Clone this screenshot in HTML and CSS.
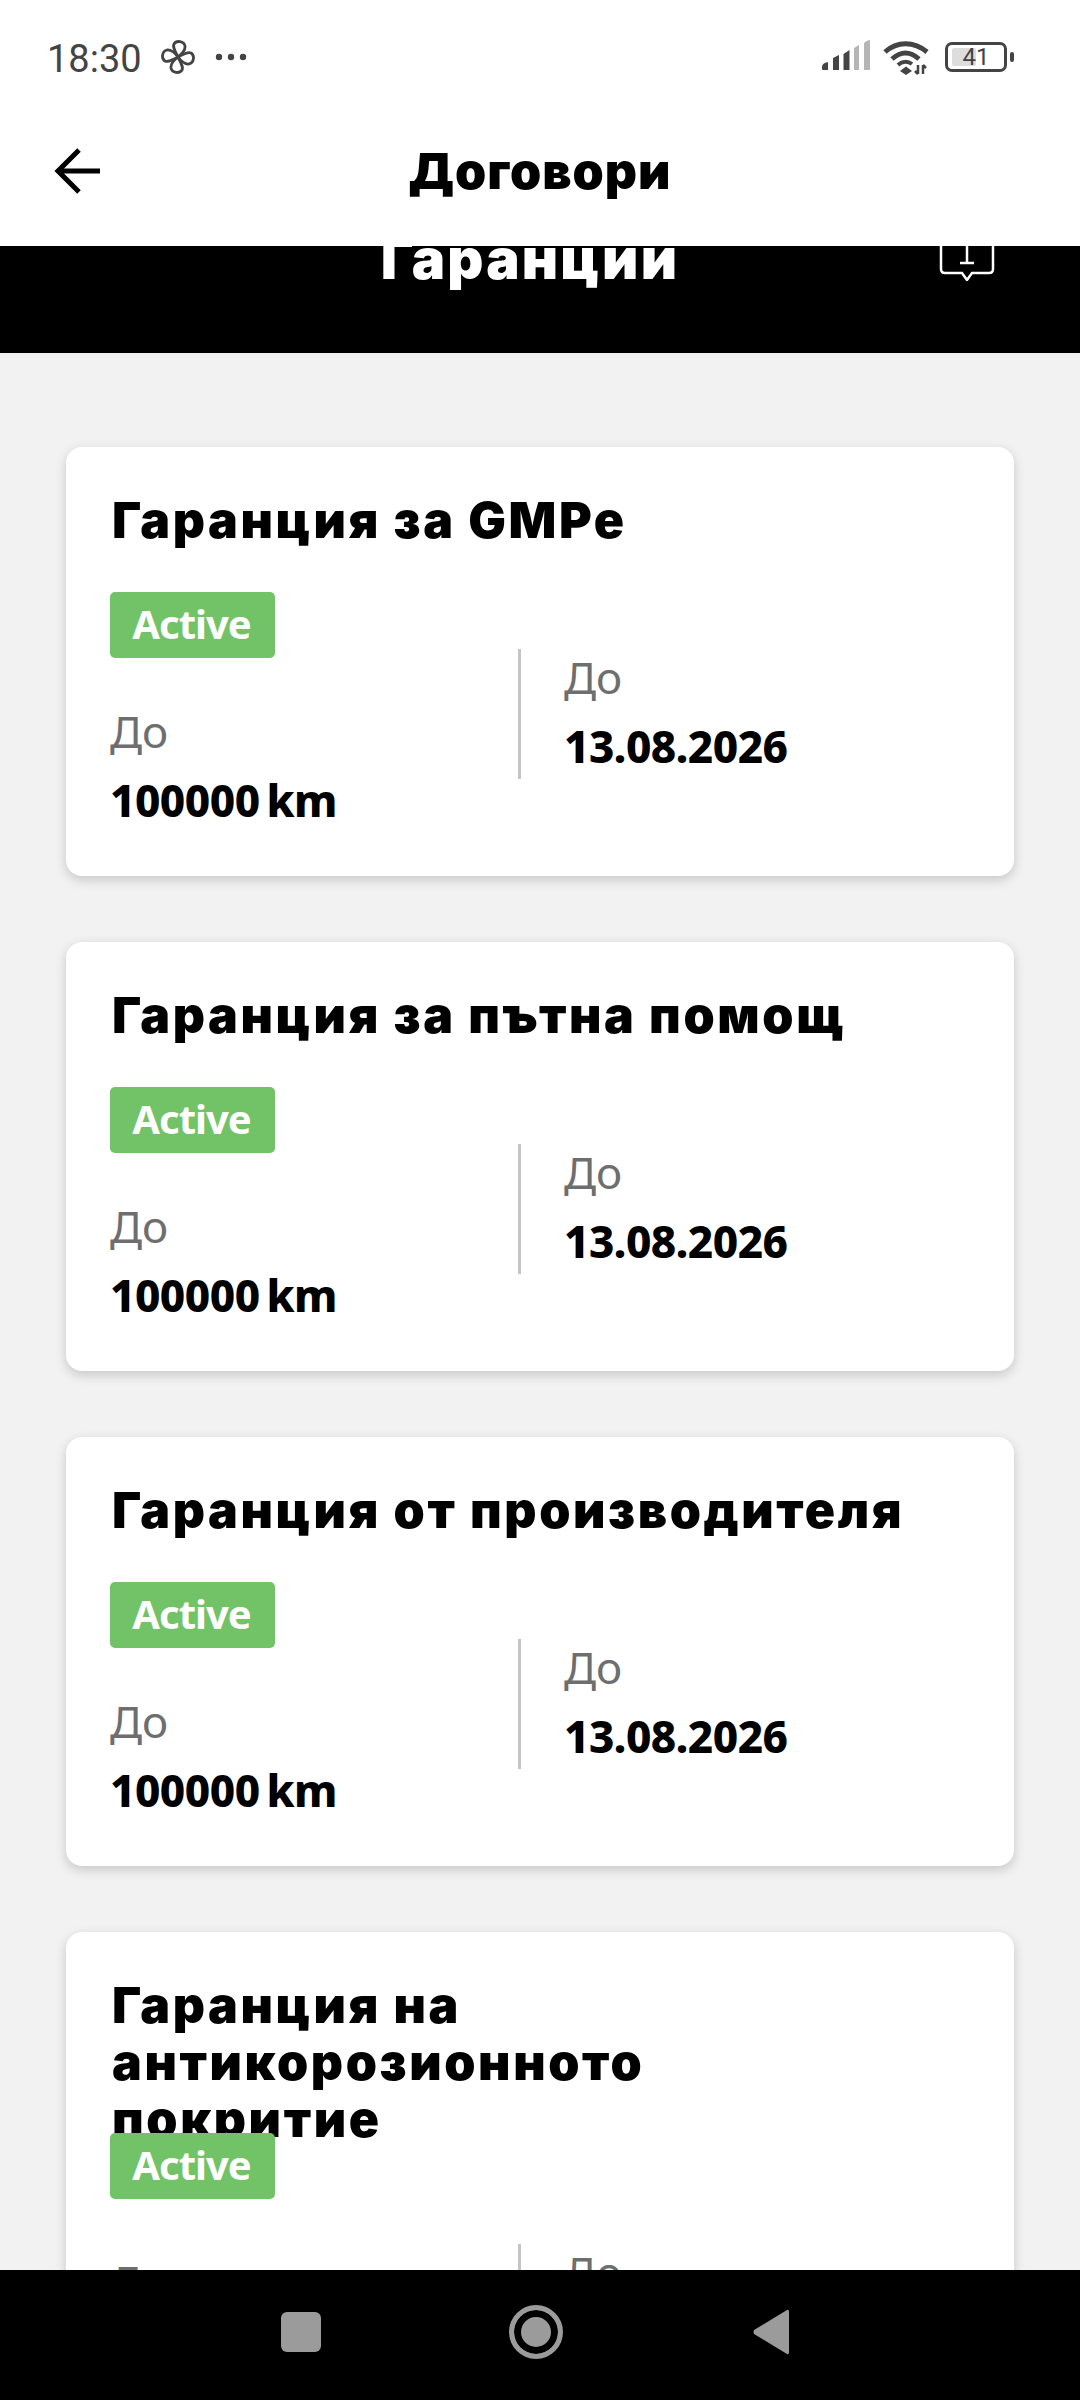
FILE: index.html
```html
<!DOCTYPE html>
<html lang="bg">
<head>
  <meta charset="UTF-8">
  <title>Договори</title>
  <link rel="stylesheet" href="styles.css">
</head>
<body>
  <div class="phone">
    <header class="top">
      <div class="status">
        <span class="time">18:30</span>
        <svg class="fan" width="34" height="34" viewBox="0 0 34 34" fill="none" stroke="#444" stroke-width="2.8" stroke-linejoin="round">
          <path d="M17 17C14 11 11.500 7 13 4C15.500 0 23 1 24 6C24.500 10 21 14 17 17Z"/>
          <path d="M17 17C14 11 11.500 7 13 4C15.500 0 23 1 24 6C24.500 10 21 14 17 17Z" transform="rotate(90 17 17)"/>
          <path d="M17 17C14 11 11.500 7 13 4C15.500 0 23 1 24 6C24.500 10 21 14 17 17Z" transform="rotate(180 17 17)"/>
          <path d="M17 17C14 11 11.500 7 13 4C15.500 0 23 1 24 6C24.500 10 21 14 17 17Z" transform="rotate(270 17 17)"/>
        </svg>
        <svg class="dots" width="32" height="8" viewBox="0 0 32 8" fill="#444">
          <circle cx="4" cy="4" r="3.200"/><circle cx="16" cy="4" r="3.200"/><circle cx="28" cy="4" r="3.200"/>
        </svg>
        <div class="status-right">
          <svg class="signal" width="48" height="30" viewBox="0 0 48 30">
            <path d="M0 27Q0 23 6 22V30H1Q0 30 0 29Z" fill="#444"/>
            <path d="M11 18L17 15V30H11Z" fill="#444"/>
            <path d="M21.500 14L27.500 10V30H21.500Z" fill="#444"/>
            <path d="M32 8L37 5V30H32Z" fill="#b5b5b5"/>
            <path d="M42 3Q45 0 48 0V30H42Z" fill="#b5b5b5"/>
          </svg>
          <svg class="wifi" width="46" height="34" viewBox="0 0 46 34" fill="none" stroke="#444" stroke-width="5">
            <path d="M2 11C14 0 31 0 44 11"/>
            <path d="M9 18C18 10 27 10 36 18"/>
            <path d="M17 30L23 25.500L29 30L23 34Z" fill="#444" stroke="none"/>
            <path d="M15 24C19 20 25 20 29 23" stroke-width="4"/>
            <path d="M35 24V33M32 30L35 33M40 33V24M40 24L43 27" stroke-width="2.500"/>
          </svg>
          <div class="battery">
            <div class="battery-body"><span class="battery-fill"></span><span class="battery-num">41</span></div>
            <span class="battery-cap"></span>
          </div>
        </div>
      </div>
      <div class="toolbar">
        <svg class="back" width="46" height="46" viewBox="0 0 46 46" fill="none" stroke="#000" stroke-width="5">
          <path d="M46 23H4"/>
          <path d="M25 2L4 23L25 44"/>
        </svg>
        <h1 class="toolbar-title">Договори</h1>
      </div>
    </header>

    <section class="hero">
      <h2 class="hero-title">Гаранции</h2>
      <svg class="hero-icon" width="56" height="60" viewBox="0 0 56 60" fill="none" stroke="#fff" stroke-width="2.500">
        <path d="M2 0V48Q2 52 6 52H23L28 59L33 52H50Q54 52 54 48V0"/>
        <path d="M28 20V42M21 42H35"/>
      </svg>
    </section>

    <main class="list">
      <article class="card">
        <h3 class="card-title">Гаранция за GMPe</h3>
        <div class="card-row">
          <div class="col-left">
            <span class="badge">Active</span>
            <span class="label">До</span>
            <span class="value">100000 km</span>
          </div>
          <div class="col-right">
            <span class="label">До</span>
            <span class="value">13.08.2026</span>
          </div>
        </div>
      </article>
      <article class="card">
        <h3 class="card-title">Гаранция за пътна помощ</h3>
        <div class="card-row">
          <div class="col-left">
            <span class="badge">Active</span>
            <span class="label">До</span>
            <span class="value">100000 km</span>
          </div>
          <div class="col-right">
            <span class="label">До</span>
            <span class="value">13.08.2026</span>
          </div>
        </div>
      </article>
      <article class="card">
        <h3 class="card-title">Гаранция от производителя</h3>
        <div class="card-row">
          <div class="col-left">
            <span class="badge">Active</span>
            <span class="label">До</span>
            <span class="value">100000 km</span>
          </div>
          <div class="col-right">
            <span class="label">До</span>
            <span class="value">13.08.2026</span>
          </div>
        </div>
      </article>
      <article class="card card-long">
        <h3 class="card-title">Гаранция на<br>антикорозионното<br>покритие</h3>
        <span class="badge">Active</span>
        <div class="card-row">
          <div class="col-left">
            <span class="label">До</span>
            <span class="value">100000 km</span>
          </div>
          <div class="col-right">
            <span class="label">До</span>
            <span class="value">13.08.2026</span>
          </div>
        </div>
      </article>
    </main>

    <nav class="navbar">
      <span class="nav-square"></span>
      <span class="nav-home"></span>
      <svg class="nav-back" width="36" height="46" viewBox="0 0 36 46"><path d="M34 1Q36 0 36 3V43Q36 46 34 45L1 25Q0 23 1 21Z" fill="#9b9b9b"/></svg>
    </nav>
  </div>
</body>
</html>
```
FILE: styles.css
```css
* { box-sizing: border-box; }
html, body { margin: 0; padding: 0; }
body { background: #f2f2f2; font-family: "Noto Sans", sans-serif; }

.phone { width: 1080px; height: 2400px; display: flex; flex-direction: column; overflow: hidden; }

.top { height: 246px; background: #fff; flex-shrink: 0; }
.status { height: 114px; padding: 40px 66px 0 47px; display: flex; align-items: flex-start; color: #444; }
.time { font-family: Roboto, sans-serif; font-size: 38px; line-height: 38px; }
.fan { margin: 0 0 0 19px; }
.dots { margin: 13px 0 0 20px; }
.status-right { margin-left: auto; display: flex; align-items: flex-start; }
.wifi { margin: 1px 0 0 13px; }
.battery { display: flex; align-items: center; margin: 2px 0 0 16px; }
.battery-body { width: 62px; height: 30px; border: 3px solid #444; border-radius: 7px; position: relative; display: flex; align-items: center; justify-content: center; }
.battery-fill { position: absolute; left: 4px; top: 3px; bottom: 3px; width: 24px; background: #ddd; border-radius: 2px; }
.battery-num { position: relative; font-family: Roboto, sans-serif; font-size: 24px; line-height: 24px; color: #444; }
.battery-cap { width: 4px; height: 10px; background: #444; border-radius: 2px; margin-left: 3px; }

.toolbar { height: 132px; position: relative; display: flex; justify-content: center; align-items: flex-start; }
.back { position: absolute; left: 54px; top: 34px; }
.toolbar-title { margin: 29px 0 0; font-family: Inter, sans-serif; font-size: 50px; font-weight: 900; letter-spacing: 1px; line-height: 57px; color: #000; }

.hero { height: 107px; background: #000; flex-shrink: 0; position: relative; overflow: hidden; display: flex; justify-content: center; align-items: flex-end; padding-right: 20px; }
.hero-title { margin: 0 0 64px; font-family: Inter, sans-serif; font-size: 56px; font-weight: 900; letter-spacing: 2.200px; line-height: 60px; color: #fff; white-space: nowrap; }
.hero-icon { position: absolute; left: 939px; bottom: 72px; }

.list { flex: 1; min-height: 0; overflow: hidden; padding: 94px 66px 0; display: flex; flex-direction: column; gap: 66px; }

.card { background: #fff; border-radius: 16px; height: 429px; padding: 45px 44px 0; box-shadow: 0 4px 12px rgba(0,0,0,0.18); flex-shrink: 0; }
.card-title { margin: 0 0 0 2px; font-family: Inter, sans-serif; font-size: 50px; font-weight: 900; letter-spacing: 2.600px; line-height: 57px; color: #000; }
.card-row { display: flex; align-items: center; margin-top: 43px; }

.col-left { width: 408px; padding-bottom: 6px; display: flex; flex-direction: column; align-items: flex-start; }
.col-right { flex: 1; height: 130px; border-left: 3px solid #c4c4c4; padding-left: 43px; }

.badge { display: block; position: relative; width: 165px; height: 66px; background: #72c367; color: #fff; border-radius: 5px; font-size: 40px; font-weight: 700; letter-spacing: -1px; line-height: 64px; padding-right: 2px; text-align: center; }
.label { display: block; font-size: 44px; line-height: 56px; color: #6e6e6e; }
.value { display: block; margin-top: 11px; font-size: 44px; font-weight: 800; letter-spacing: -0.500px; word-spacing: -4px; line-height: 60px; color: #000; }
.badge + .label { margin-top: 45px; }

.card-long { height: 700px; }
.card-long .card-title { height: 156px; }
.card-long .card-row { margin-top: 39px; }
.card-long .col-left { padding: 15px 0 0; }

.navbar { height: 130px; flex-shrink: 0; background: #000; display: flex; align-items: center; padding: 0 0 6px 281px; }
.nav-square { width: 40px; height: 40px; background: #9b9b9b; border-radius: 6px; }
.nav-home { width: 54px; height: 54px; margin-left: 188px; border-radius: 50%; background: #9b9b9b; border: 5px solid #9b9b9b; box-shadow: inset 0 0 0 7px #000; }
.nav-back { margin-left: 190px; }
```
